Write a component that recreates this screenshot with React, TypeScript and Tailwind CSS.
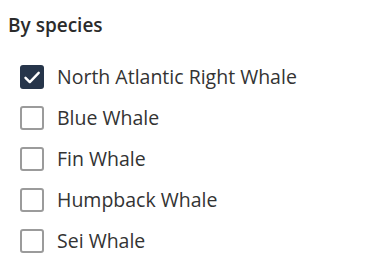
import React, { useState } from 'react';

const species = [
    'North Atlantic Right Whale',
    'Blue Whale',
    'Fin Whale',
    'Humpback Whale',
    'Sei Whale',
];

const App: React.FC = () => {
    const [checked, setChecked] = useState<string[]>(['North Atlantic Right Whale']);

    const toggle = (name: string) => {
        setChecked((prev) =>
            prev.includes(name) ? prev.filter((n) => n !== name) : [...prev, name]
        );
    };

    return (
        <div className="w-[391px] h-[262px] bg-white px-2 pt-[12px] font-['Open_Sans',sans-serif]">
            <h3 className="text-[19px] font-semibold text-[#2b2b2b] leading-[26px]">By species</h3>
            <ul className="mt-[27px] pl-3 flex flex-col gap-[17px]">
                {species.map((name) => {
                    const isChecked = checked.includes(name);
                    return (
                        <li key={name}>
                            <label className="flex items-center gap-[13px] cursor-pointer">
                                <input
                                    type="checkbox"
                                    className="sr-only"
                                    checked={isChecked}
                                    onChange={() => toggle(name)}
                                />
                                <span
                                    className={`w-[24px] h-[24px] rounded-[3px] flex items-center justify-center ${
                                        isChecked
                                            ? 'bg-[#26354a]'
                                            : 'border-2 border-[#9b9b9b] bg-white'
                                    }`}
                                >
                                    {isChecked && (
                                        <svg width="24" height="24" viewBox="0 0 24 24" fill="none">
                                            <path
                                                d="M5.5 12.8l4.3 4.3 8.9-9.3"
                                                stroke="white"
                                                strokeWidth="2.4"
                                                strokeLinecap="round"
                                                strokeLinejoin="round"
                                            />
                                        </svg>
                                    )}
                                </span>
                                <span className="text-[19.5px] text-[#333] leading-[24px]">{name}</span>
                            </label>
                        </li>
                    );
                })}
            </ul>
        </div>
    );
};

export default App;
